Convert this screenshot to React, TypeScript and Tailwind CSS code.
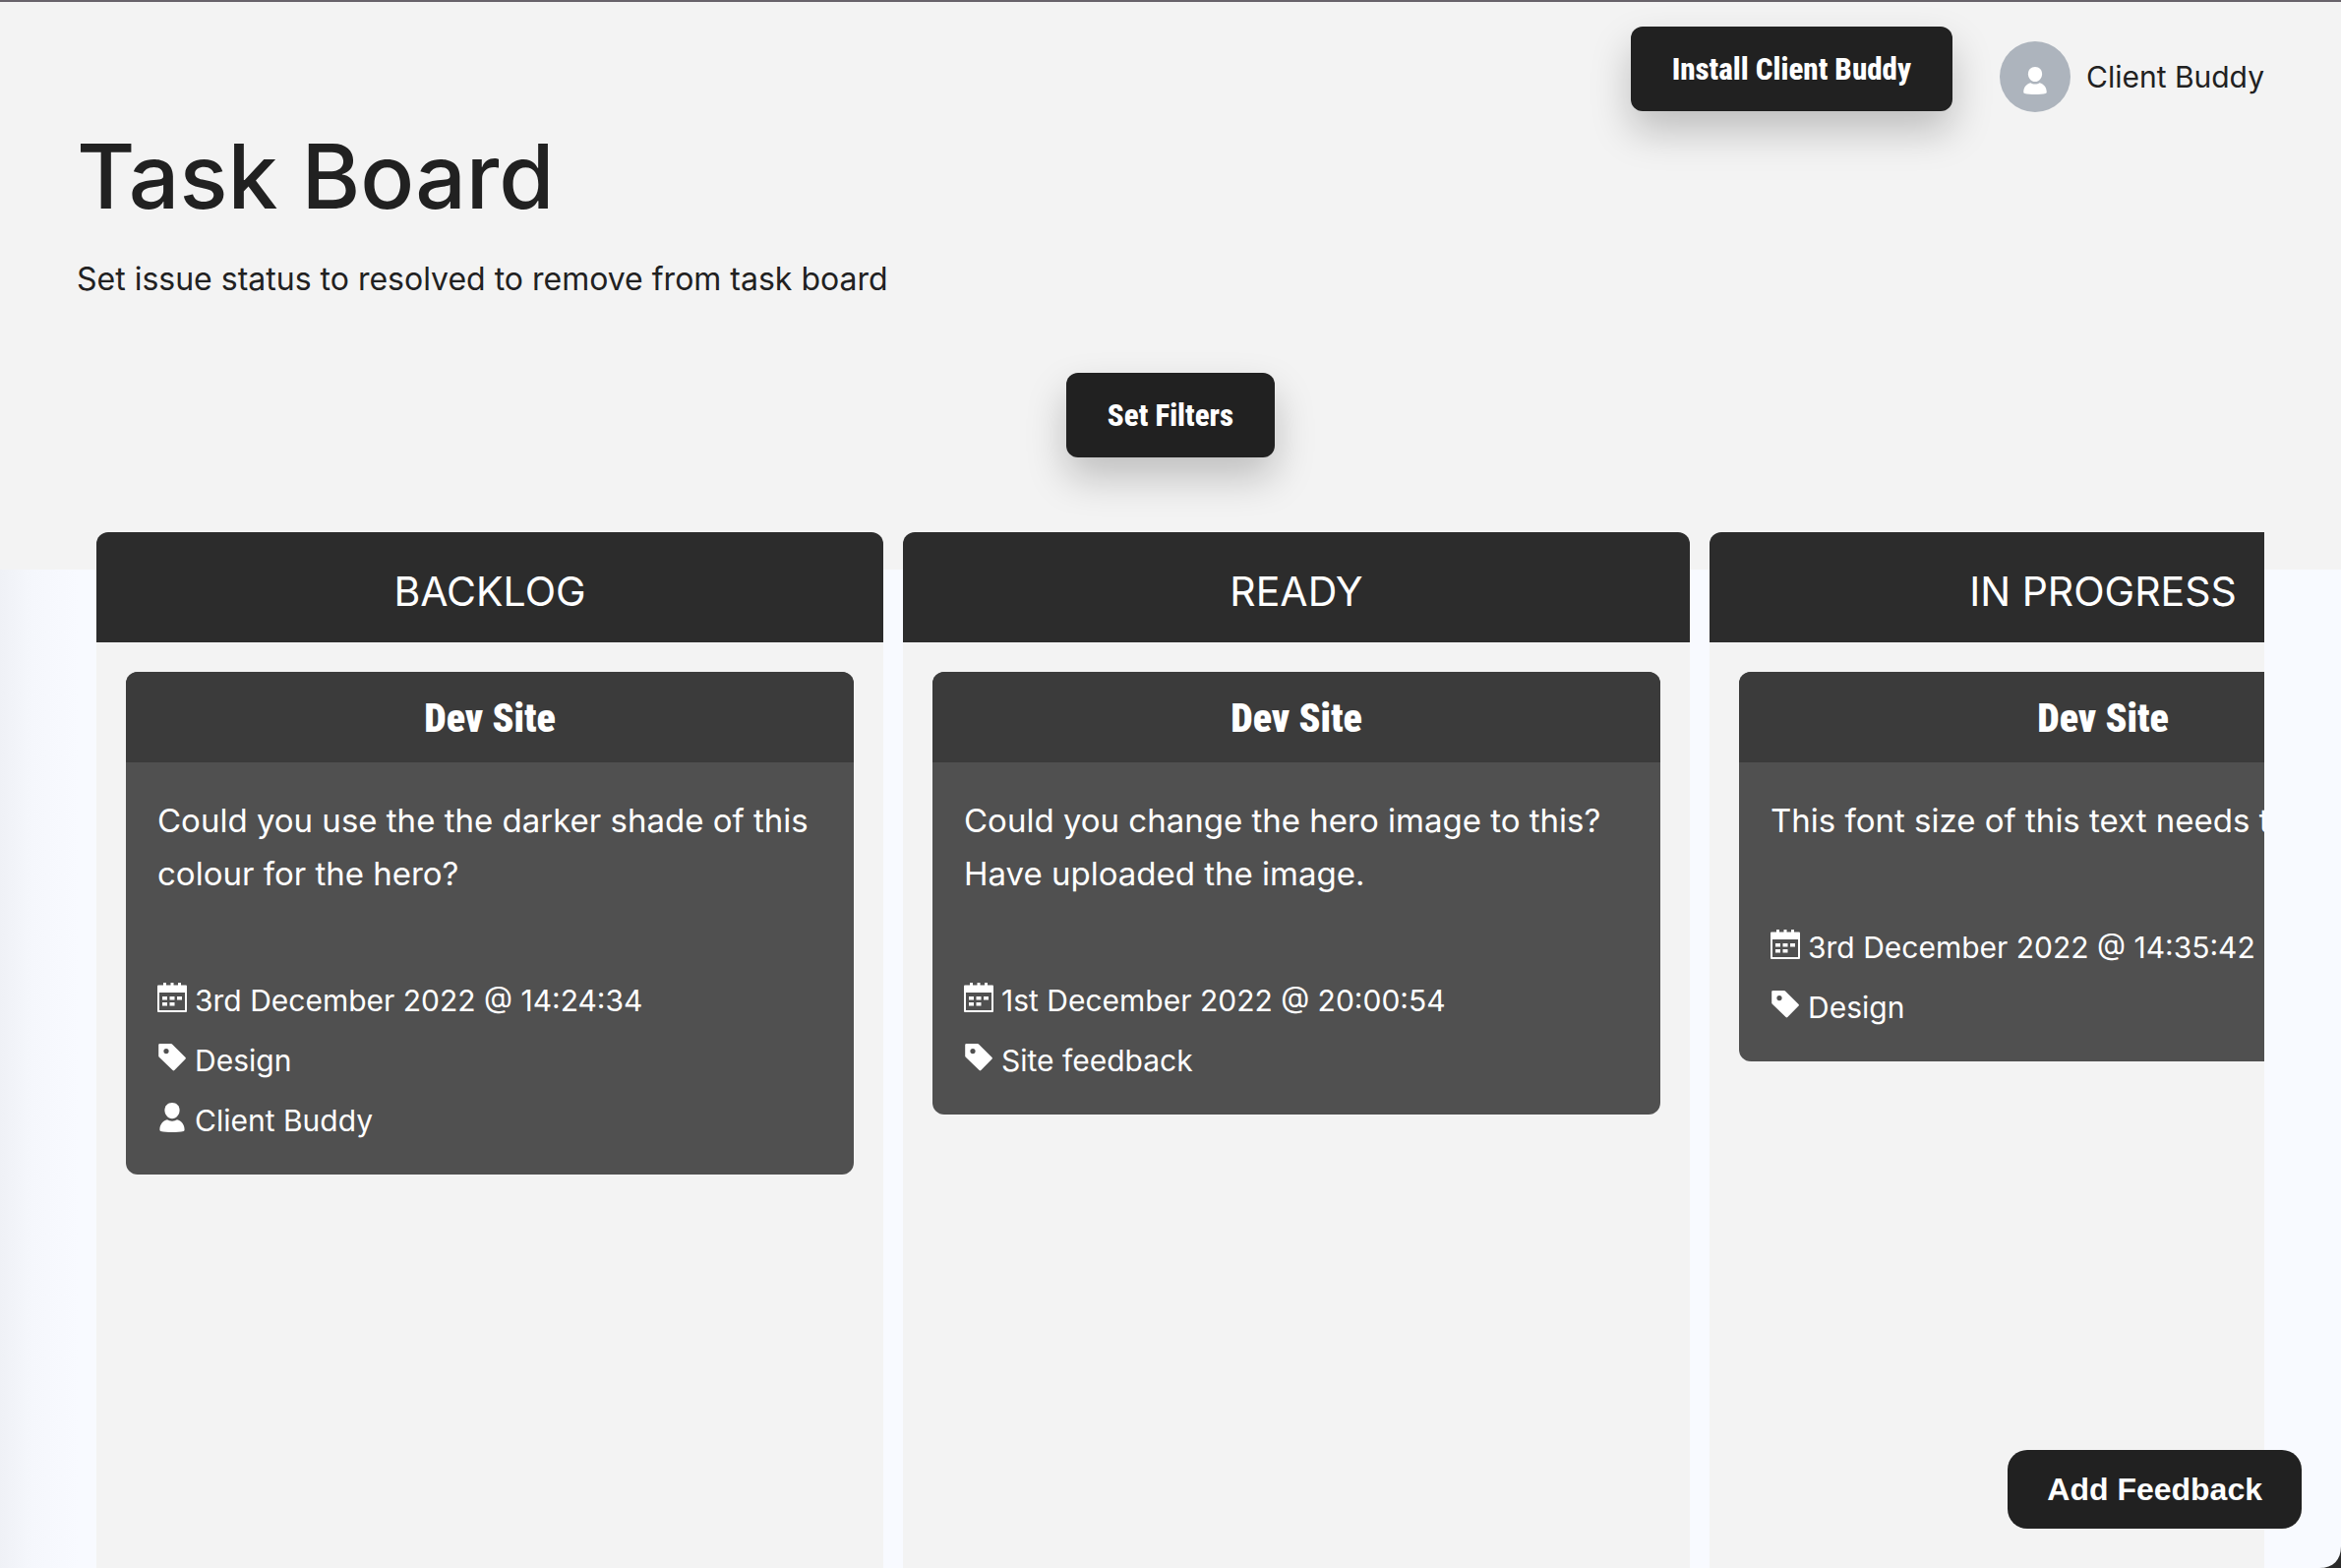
import type { ReactNode } from "react";

type Meta = { icon: "calendar" | "tag" | "person"; text: string };
type Task = { site: string; body: string; meta: Meta[] };
type Column = { title: string; tasks: Task[] };

const columns: Column[] = [
  {
    title: "BACKLOG",
    tasks: [
      {
        site: "Dev Site",
        body: "Could you use the the darker shade of this colour for the hero?",
        meta: [
          { icon: "calendar", text: "3rd December 2022 @ 14:24:34" },
          { icon: "tag", text: "Design" },
          { icon: "person", text: "Client Buddy" },
        ],
      },
    ],
  },
  {
    title: "READY",
    tasks: [
      {
        site: "Dev Site",
        body: "Could you change the hero image to this? Have uploaded the image.",
        meta: [
          { icon: "calendar", text: "1st December 2022 @ 20:00:54" },
          { icon: "tag", text: "Site feedback" },
        ],
      },
    ],
  },
  {
    title: "IN PROGRESS",
    tasks: [
      {
        site: "Dev Site",
        body: "This font size of this text needs to go up",
        meta: [
          { icon: "calendar", text: "3rd December 2022 @ 14:35:42" },
          { icon: "tag", text: "Design" },
        ],
      },
    ],
  },
];

function CalendarIcon() {
  return (
    <svg viewBox="0 0 30 30" className="size-[30px]" fill="currentColor" aria-hidden="true">
      <path
        fillRule="evenodd"
        d="M6 0h3v2.500h4.500V0h3v2.500H21V0h3v2.500h5a1 1 0 0 1 1 1V29a1 1 0 0 1-1 1H1a1 1 0 0 1-1-1V3.500a1 1 0 0 1 1-1h5zM2 10v18h26V10z"
      />
      <path d="M5 14h5v3.500H5zM12.500 14h5v3.500h-5zM20 14h5v3.500h-5zM5 20h5v3.500H5zM12.500 20h5v3.500h-5z" />
    </svg>
  );
}

function TagIcon() {
  return (
    <svg viewBox="0 0 30 30" className="size-[30px]" fill="currentColor" aria-hidden="true">
      <path
        fillRule="evenodd"
        d="M2.500 1H14a1.500 1.500 0 0 1 1 .4L28.600 15a1.200 1.200 0 0 1 0 1.600L17.300 28.100a1.200 1.200 0 0 1-1.700 0L1.600 14.500a1.500 1.500 0 0 1-.4-1V2.300A1.300 1.300 0 0 1 2.500 1zM9 6a2.600 2.600 0 1 0 0 5.200A2.600 2.600 0 0 0 9 6z"
      />
    </svg>
  );
}

function PersonIcon({ className }: { className: string }) {
  return (
    <svg viewBox="0 0 30 30" className={className} fill="currentColor" aria-hidden="true">
      <path d="M15 0c4.600 0 7.600 3.300 7.600 7.700 0 4.300-3.400 8.500-7.600 8.500s-7.600-4.200-7.600-8.500C7.400 3.300 10.400 0 15 0z" />
      <path d="M10 17.300c1.300.9 3 1.400 5 1.400s3.700-.5 5-1.400c4.400 1 7.600 5 7.600 10.200 0 .7-.4 1.200-1 1.400C23.600 29.700 19 30 15 30s-8.600-.3-11.600-1.100c-.6-.2-1-.7-1-1.400 0-5.200 3.200-9.200 7.600-10.200z" />
    </svg>
  );
}

function MetaIcon({ icon }: { icon: Meta["icon"] }) {
  if (icon === "calendar") return <CalendarIcon />;
  if (icon === "tag") return <TagIcon />;
  return <PersonIcon className="size-[30px]" />;
}

function DarkButton({ children }: { children: ReactNode }) {
  return (
    <button
      type="button"
      className="h-[86px] rounded-xl bg-[#212121] px-[42px] pt-[2px] font-['Roboto_Condensed','Roboto',sans-serif] text-[31px] font-extrabold text-white shadow-[0_20px_40px_rgba(0,0,0,0.22)]"
    >
      {children}
    </button>
  );
}

function TaskCard({ task }: { task: Task }) {
  return (
    <article className="overflow-hidden rounded-xl bg-[#505050] text-white">
      <h3 className="bg-[#3b3b3b] pt-1 text-center font-['Roboto_Condensed','Roboto',sans-serif] text-[40px] leading-[88px] font-black">
        {task.site}
      </h3>
      <div className="px-8 pt-8 pb-6">
        <p className="text-[33px] leading-[54px]">{task.body}</p>
        <ul className="mt-[72px]">
          {task.meta.map((m) => (
            <li key={m.text} className="flex h-[61px] items-center gap-2 text-[30px]">
              <span className="pb-2">
                <MetaIcon icon={m.icon} />
              </span>
              {m.text}
            </li>
          ))}
        </ul>
      </div>
    </article>
  );
}

export default function App() {
  return (
    <div className="relative flex h-screen flex-col overflow-hidden border-t-2 border-[#68636a] bg-[#f8faff] bg-[linear-gradient(to_right,#eff1f6,#f5f7fc_32px,#f8faff_80px)] font-['Inter',sans-serif] text-[#212121]">
      <header className="bg-[#f3f3f3] px-[78px] pt-[25px] pb-[114px]">
        <div className="flex items-start justify-end gap-12">
          <DarkButton>Install Client Buddy</DarkButton>
          <a href="#profile" className="mt-[15px] flex items-center gap-4 text-[30px]">
            <span className="flex size-[72px] items-center justify-center rounded-full bg-[#adb4bd] pt-2 text-white">
              <PersonIcon className="size-7" />
            </span>
            Client Buddy
          </a>
        </div>
        <h1 className="mt-2 text-[91px] leading-[114px] font-medium">Task Board</h1>
        <p className="mt-5 text-[32px] leading-[56px]">
          Set issue status to resolved to remove from task board
        </p>
        <div className="mt-[67px] flex justify-center">
          <DarkButton>Set Filters</DarkButton>
        </div>
      </header>
      <main className="relative -mt-[38px] mr-[78px] ml-[98px] flex min-h-0 flex-1 gap-5 overflow-hidden">
        {columns.map((column) => (
          <section
            key={column.title}
            className="w-[800px] shrink-0 overflow-hidden rounded-t-xl bg-[#f3f3f3]"
          >
            <h2 className="bg-[#2c2c2c] pt-2 text-center text-[41px] leading-[104px] text-white">
              {column.title}
            </h2>
            <div className="p-[30px]">
              {column.tasks.map((task) => (
                <TaskCard key={task.body} task={task} />
              ))}
            </div>
          </section>
        ))}
      </main>
      <button
        type="button"
        className="absolute right-10 bottom-10 h-20 rounded-[20px] bg-[#212121] px-10 font-['Liberation_Sans',sans-serif] text-[32px] font-bold text-white"
      >
        Add Feedback
      </button>
      <svg viewBox="0 0 22 22" className="absolute right-0 bottom-0 size-[22px]" aria-hidden="true">
        <path d="M22 0v22H0C14 22 22 14 22 0z" fill="#2b2b2b" />
      </svg>
    </div>
  );
}
